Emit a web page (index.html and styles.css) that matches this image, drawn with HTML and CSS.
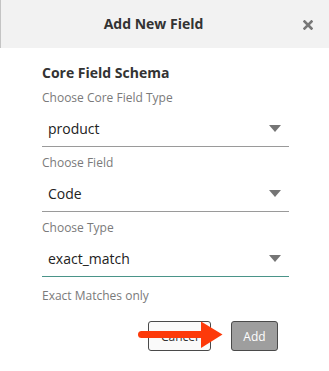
FILE: index.html
```html
<!DOCTYPE html>
<html>
<head>
<meta charset="utf-8">
<link rel="stylesheet" href="styles.css">
</head>
<body>
<div class="modal">
  <div class="modal-header">
    <div class="modal-title">Add New Field</div>
    <svg class="close" width="10" height="10" viewBox="0 0 10 10"><path d="M1.5 1.5 L8.5 8.5 M8.5 1.5 L1.5 8.5" stroke="#777" stroke-width="2.6" stroke-linecap="square"/></svg>
  </div>
  <div class="modal-body">
    <div class="section-title">Core Field Schema</div>
    <div class="field">
      <div class="label">Choose Core Field Type</div>
      <div class="select"><span class="value">product</span><svg class="caret" width="12" height="7" viewBox="0 0 12 7"><path d="M0 0 H12 L6 7 Z" fill="#757575"/></svg></div>
    </div>
    <div class="field">
      <div class="label">Choose Field</div>
      <div class="select"><span class="value">Code</span><svg class="caret" width="12" height="7" viewBox="0 0 12 7"><path d="M0 0 H12 L6 7 Z" fill="#757575"/></svg></div>
    </div>
    <div class="field">
      <div class="label">Choose Type</div>
      <div class="select focused"><span class="value">exact_match</span><svg class="caret" width="12" height="7" viewBox="0 0 12 7"><path d="M0 0 H12 L6 7 Z" fill="#757575"/></svg></div>
    </div>
    <div class="hint">Exact Matches only</div>
    <div class="footer">
      <button class="btn btn-cancel">Cancel</button>
      <button class="btn btn-add">Add</button>
      <svg class="arrow" width="86" height="28" viewBox="0 0 86 28"><path d="M3.5 10 H64 V17 H3.5 A3.5 3.5 0 0 1 3.5 10 Z" fill="#fd3a0a"/><path d="M63 0.5 L84.5 13.5 L63 27 Z" fill="#fd3a0a"/></svg>
    </div>
  </div>
</div>
</body>
</html>
```
FILE: styles.css
```css
html, body {
  margin: 0;
  padding: 0;
  background: #fff;
}
body {
  font-family: "Open Sans", "Liberation Sans", sans-serif;
  width: 329px;
  height: 371px;
  overflow: hidden;
}
.modal-header {
  height: 48px;
  background: #f2f2f2;
  border-left: 1px solid #c4c4c4;
  display: flex;
  align-items: center;
}
.modal-title {
  flex: 1;
  text-align: center;
  font-size: 14px;
  font-weight: 700;
  color: #333;
  line-height: 48px;
  padding-left: 3px;
}
.close {
  margin-right: 16px;
  margin-top: 2px;
}
.modal-body {
  padding: 15px 40px 0 42px;
}
.section-title {
  font-size: 14px;
  font-weight: 700;
  color: #333;
  line-height: 20px;
  margin-bottom: 6px;
}
.field + .field {
  margin-top: 7px;
}
.label {
  font-size: 12px;
  line-height: 18px;
  color: #7a7a7a;
}
.select {
  display: flex;
  align-items: center;
  justify-content: space-between;
  padding: 12px 8px 7px 6px;
  border-bottom: 1px solid #9a9a9a;
}
.select.focused {
  border-bottom-color: #4a9489;
}
.value {
  font-size: 14px;
  line-height: 20px;
  color: #222;
}
.caret {
  margin-top: -1px;
}
.hint {
  font-size: 12px;
  line-height: 18px;
  color: #7a7a7a;
  margin-top: 10px;
}
.footer {
  position: relative;
  display: flex;
  justify-content: flex-end;
  gap: 20px;
  margin-top: 16px;
  padding-right: 11px;
}
.btn {
  font-family: "Open Sans", "Liberation Sans", sans-serif;
  font-size: 12px;
  height: 30px;
  border: 1px solid #4a4a4a;
  border-radius: 3px;
  padding: 0;
  margin: 0;
}
.btn-cancel {
  width: 63px;
  background: #fafafa;
  color: #333;
}
.btn-add {
  width: 47px;
  background: #9e9e9e;
  color: #fff;
}
.arrow {
  position: absolute;
  left: 96px;
  top: 0;
}
```
